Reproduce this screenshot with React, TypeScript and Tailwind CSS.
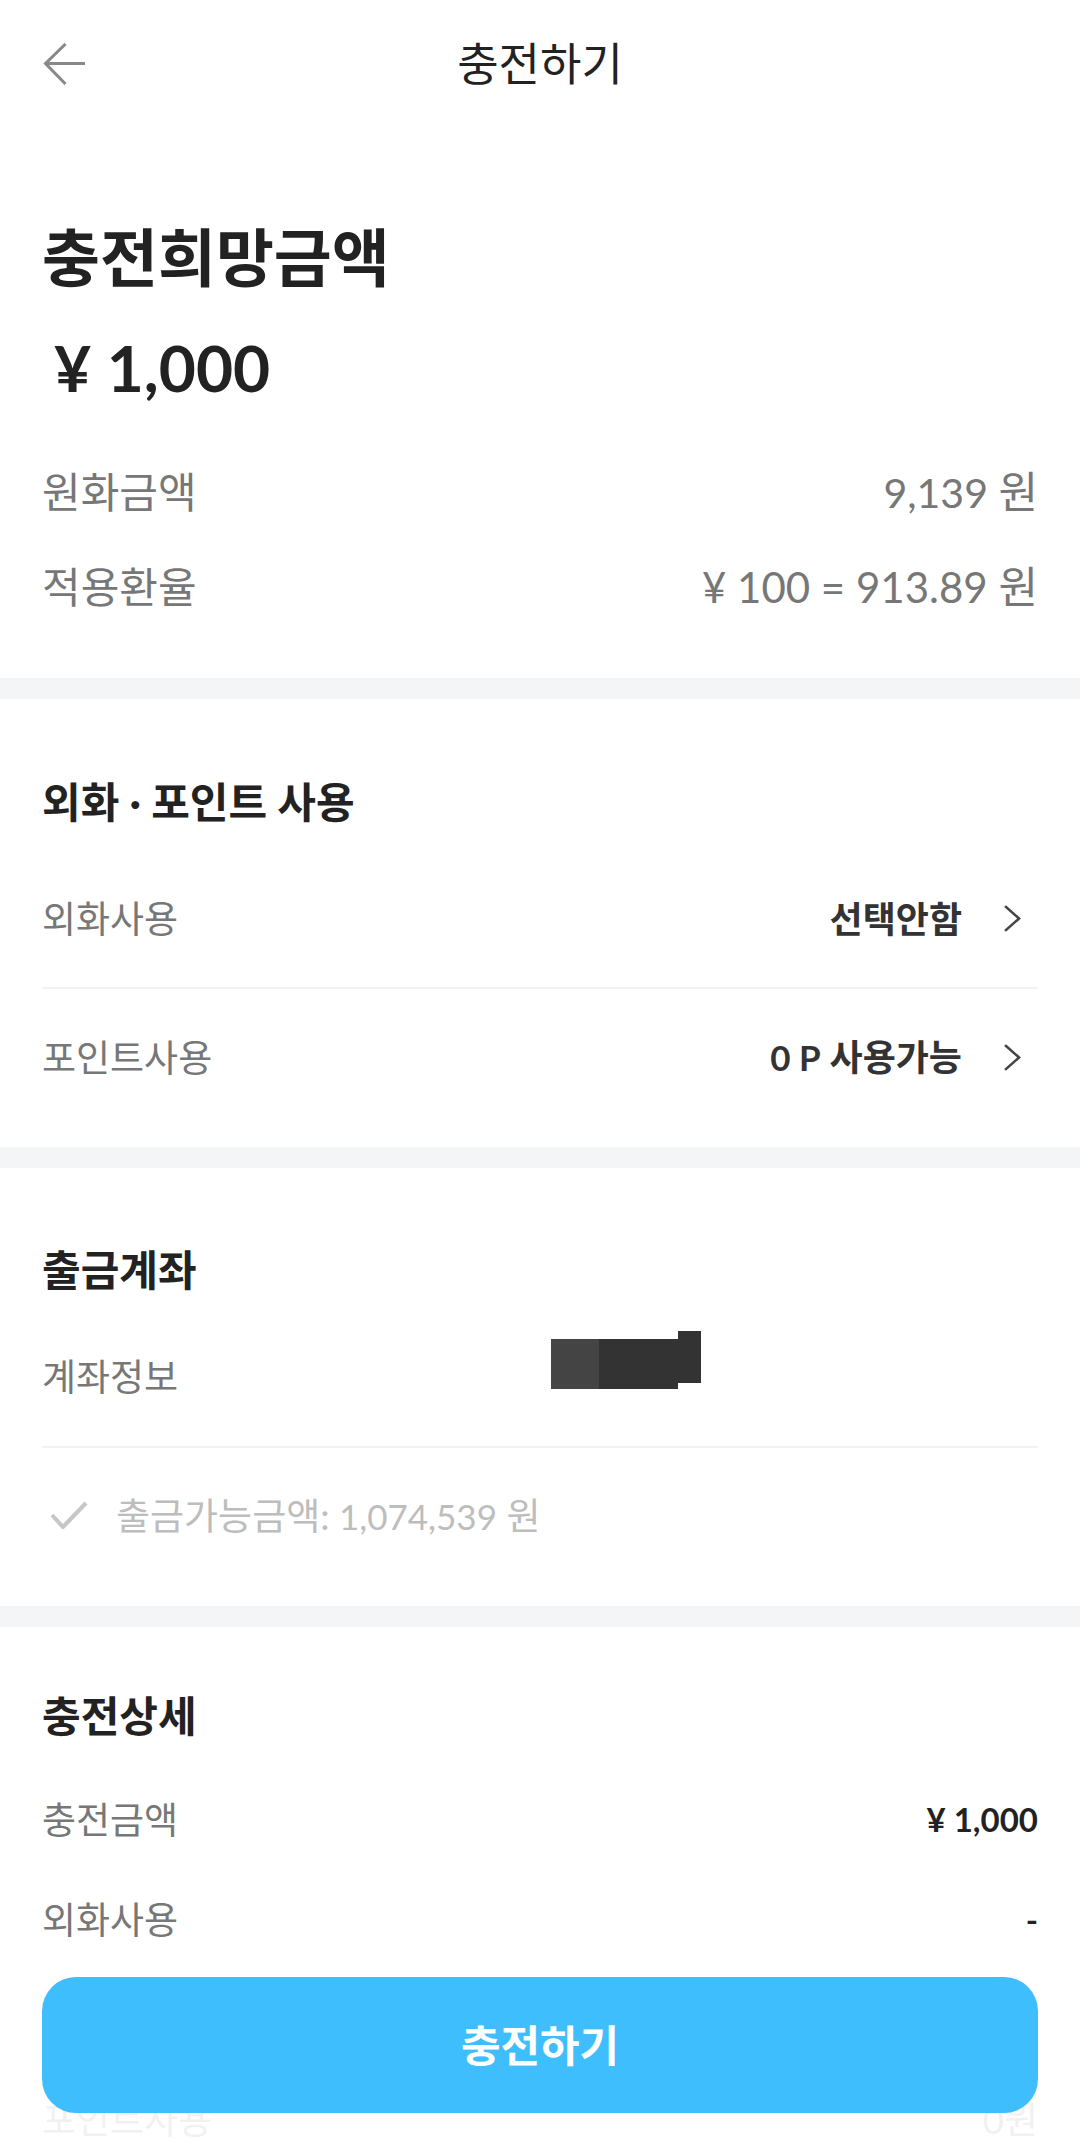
export default function App() {
  const Chevron = () => (
    <svg className="ml-[42px] mr-[17px]" width="17" height="27" viewBox="0 0 17 27" fill="none" stroke="#444" strokeWidth="2.6" strokeLinecap="square">
      <path d="M2 2l13 11.5L2 25" />
    </svg>
  );
  return (
    <div className="relative w-[1080px] h-[2139px] overflow-hidden bg-white font-['Lato','Noto_Sans_CJK_KR',sans-serif] text-[#222]">
      {/* header */}
      <div className="h-[128px] grid grid-cols-[1fr_auto_1fr] items-center">
        <div className="pl-[43px] flex items-center">
          <svg width="42" height="42" viewBox="0 0 42 42" fill="none" stroke="#888" strokeWidth="3">
            <path d="M2 20.5H42M22.5 1L2.5 20.5L22.5 41" />
          </svg>
        </div>
        <span className="text-[45px] leading-none">충전하기</span>
        <div />
      </div>

      {/* section 1 */}
      <section className="px-[42px] pb-[44px]">
        <div className="mt-[88px] h-[80px] flex items-center text-[63px] font-bold leading-none">충전희망금액</div>
        <div className="mt-[32px] h-[80px] flex items-center pl-[12px] text-[64px] font-bold leading-none">¥ 1,000</div>
        <div className="mt-[36px] h-[95px] flex items-center justify-between text-[#777] leading-none">
          <span className="text-[42px]">원화금액</span>
          <span className="text-[41px]">9,139 <span className="text-[43px]">원</span></span>
        </div>
        <div className="h-[95px] flex items-center justify-between text-[#777] leading-none">
          <span className="text-[42px]">적용환율</span>
          <span className="text-[42px]">¥ 100 = 913.89 <span className="text-[43px]">원</span></span>
        </div>
      </section>

      <div className="h-[21px] bg-[#f4f5f7]" />

      {/* section 2 */}
      <section className="px-[42px] pt-[73px] pb-[22px]">
        <div className="h-[60px] flex items-center text-[42px] font-bold leading-none">외화 · 포인트 사용</div>
        <div className="mt-[18px] h-[137px] flex items-center justify-between leading-none">
          <span className="text-[37px] text-[#777]">외화사용</span>
          <div className="flex items-center">
            <span className="text-[36px] font-bold text-[#333]">선택안함</span>
            <Chevron />
          </div>
        </div>
        <div className="h-[2px] bg-[#f2f2f2]" />
        <div className="h-[136px] flex items-center justify-between leading-none">
          <span className="text-[37px] text-[#777]">포인트사용</span>
          <div className="flex items-center">
            <span className="text-[36px] font-bold text-[#333]"><span className="text-[35px]">0 P</span> 사용가능</span>
            <Chevron />
          </div>
        </div>
      </section>

      <div className="h-[21px] bg-[#f4f5f7]" />

      {/* section 3 */}
      <section className="px-[42px] pt-[72px] pb-[24px]">
        <div className="h-[60px] flex items-center text-[42px] font-bold leading-none">출금계좌</div>
        <div className="mt-[6px] h-[140px] flex items-center leading-none">
          <span className="w-[509px] text-[37px] text-[#777]">계좌정보</span>
          <div className="self-start mt-[24px] flex items-start">
            <div className="mt-[9px] w-[48px] h-[50px] bg-[#444]" />
            <div className="mt-[9px] w-[79px] h-[50px] bg-[#333]" />
            <div className="mt-[1px] w-[23px] h-[52px] bg-[#333]" />
          </div>
        </div>
        <div className="h-[2px] bg-[#f2f2f2]" />
        <div className="h-[134px] flex items-center leading-none">
          <svg className="ml-[8px] mr-[28px]" width="38" height="28" viewBox="0 0 38 28" fill="none" stroke="#c6c6c6" strokeWidth="4">
            <path d="M2 14l11 12L36 2" />
          </svg>
          <span className="text-[37px] text-[#bdbdbd]">출금가능금액: <span className="text-[35px]">1,074,539</span> 원</span>
        </div>
      </section>

      <div className="h-[21px] bg-[#f4f5f7]" />

      {/* section 4 */}
      <section className="px-[42px] pt-[59px]">
        <div className="h-[60px] flex items-center text-[42px] font-bold leading-none">충전상세</div>
        <div className="mt-[23px] h-[100px] flex items-center justify-between leading-none">
          <span className="text-[37px] text-[#777]">충전금액</span>
          <span className="text-[33px] font-bold text-[#222]">¥ 1,000</span>
        </div>
        <div className="h-[100px] flex items-center justify-between leading-none">
          <span className="text-[37px] text-[#777]">외화사용</span>
          <span className="text-[33px] font-bold text-[#222]">-</span>
        </div>
        <div className="h-[100px] flex items-center justify-between leading-none">
          <span className="text-[37px] text-[#777]">외화환율</span>
          <span className="text-[33px] text-[#777]">-</span>
        </div>
        <div className="h-[100px] flex items-center justify-between leading-none">
          <span className="text-[37px] text-[#777]">포인트사용</span>
          <span className="text-[37px] text-[#777]">0원</span>
        </div>
      </section>

      {/* bottom fixed bar */}
      <div className="absolute left-0 right-0 bottom-0 h-[184px] bg-white/90 px-[42px] pt-[22px]">
        <button className="w-full h-[136px] rounded-[34px] bg-[#3fbefd] flex items-center justify-center text-white text-[43px] font-bold leading-none">
          충전하기
        </button>
      </div>
    </div>
  );
}
